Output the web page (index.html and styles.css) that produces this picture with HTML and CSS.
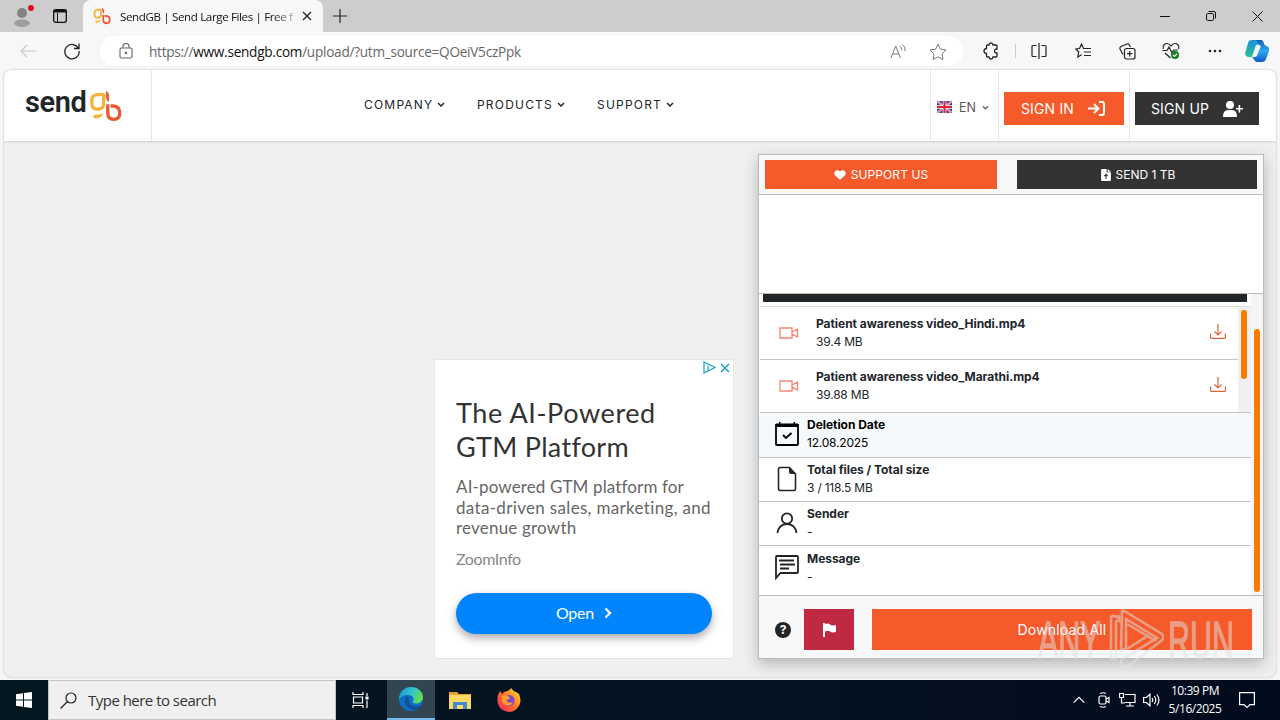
FILE: index.html
```html
<!DOCTYPE html>
<html lang="en">
<head>
<meta charset="utf-8">
<title>SendGB | Send Large Files</title>
<link rel="stylesheet" href="styles.css">
</head>
<body>
<div class="tabs">
  <svg class="profile" width="22" height="24" viewBox="0 0 22 24"><circle cx="9" cy="9" r="5" fill="#858381"/><path d="M1 20c0-6 16-6 16 0q-3 3-8 3t-8-3z" fill="#a09e9c"/><circle cx="18" cy="4" r="3" fill="#e00b1c"/></svg>
  <svg class="workspace" width="14" height="14" viewBox="0 0 14 14"><rect x=".7" y=".7" width="12.6" height="12.6" rx="2" fill="none" stroke="#111" stroke-width="1.3"/><path d="M1 1h12v2H1zM4.5 4v9" fill="#111" stroke="#111"/></svg>
  <div class="tab">
    <svg width="18" height="18" viewBox="0 0 36 34"><use href="#gb"/></svg>
    <span class="tab-title">SendGB | Send Large Files | Free f</span>
    <svg class="tab-close" width="10" height="10" viewBox="0 0 10 10"><path d="M1 1l8 8M9 1L1 9" stroke="#222" stroke-width="1.3"/></svg>
  </div>
  <svg class="tab-new" width="14" height="14" viewBox="0 0 14 14"><path d="M7 0v14M0 7h14" stroke="#222" stroke-width="1.2"/></svg>
  <div class="window-buttons">
    <svg width="10" height="12" viewBox="0 0 10 12"><path d="M0 6.5h10" stroke="#111"/></svg>
    <svg width="10" height="10" viewBox="0 0 10 10" fill="none" stroke="#111"><rect x=".5" y="2.5" width="7" height="7" rx="1.3"/><path d="M2.5.5H8Q9.5.5 9.5 2v5.500"/></svg>
    <svg width="11" height="11" viewBox="0 0 11 11"><path d="M.5.5l10 10M10.500.5l-10 10" stroke="#111"/></svg>
  </div>
</div>
<div class="toolbar">
  <svg class="back" width="16" height="14" viewBox="0 0 16 14" fill="none" stroke="#c8c8c8" stroke-width="1.2"><path d="M16 7H1M7 1L1 7l6 6"/></svg>
  <svg class="reload" width="16" height="18" viewBox="0 0 16 18" fill="none" stroke="#222" stroke-width="1.3"><path d="M14.500 6.500A7.200 7.200 0 1 0 15.200 9M15 1.500v5h-5"/></svg>
  <div class="address">
    <svg class="lock" width="14" height="16" viewBox="0 0 14 16" fill="none" stroke="#666" stroke-width="1.100"><rect x="1" y="5" width="12" height="10" rx="1.500"/><path d="M4 5V3.500a3 3 0 0 1 6 0V5"/><circle cx="7" cy="10" r=".7" fill="#666"/></svg>
    <span class="url">https://<b>www.sendgb.com</b><i>/upload/?utm_source=QOeiV5czPpk</i></span>
    <svg class="read" width="17" height="15" viewBox="0 0 17 15" fill="none" stroke="#777"><path d="M1 14L5.700 2 10.500 14M2.700 10h6M10 2q2 1.500 1.500 4M12.500.5q3.500 2.500 2.500 6.500"/></svg>
    <svg class="star" width="18" height="17" viewBox="0 0 18 17" fill="none" stroke="#777" stroke-linejoin="round"><path d="M9 1l2.400 5.100 5.600.8-4 4 1 5.600-5-2.700-5 2.700 1-5.600-4-4 5.600-.8z"/></svg>
  </div>
  <div class="actions">
    <svg width="16" height="18" viewBox="0 0 16 18" fill="none" stroke="#222" stroke-width="1.300"><path d="M4.500 3H6q.3-2 2-2t2 2h3q1 0 1 1v3q-2.500-.2-2.500 2t2.500 2v3q0 1-1 1h-3q-.2 2-2 2t-2-2H4.500q-1 0-1-1v-2.500Q1 11.300 1 9t2.500-2.500V4q0-1 1-1z"/></svg>
    <span class="divider"></span>
    <svg width="16" height="16" viewBox="0 0 16 16" fill="none" stroke="#222" stroke-width="1.200"><path d="M5.500 2.500H2q-1 0-1 1v9q0 1 1 1h3.500M10.500 2.500H14q1 0 1 1v9q0 1-1 1h-3.500M8 0v16"/></svg>
    <svg width="17" height="16" viewBox="0 0 17 16" fill="none" stroke="#222" stroke-width="1.200"><path d="M9 5.500h-.5L6.500 1 4.600 5.500.9 6l2.800 3-.9 5 3.800-2.300M9 5.500h7M9 9h7M9 12.500h7"/></svg>
    <svg width="17" height="17" viewBox="0 0 17 17" fill="none" stroke="#222" stroke-width="1.200"><rect x="5.500" y="5.500" width="10.500" height="10.500" rx="2"/><path d="M10.700 8v5.500M8 10.700h5.500M4 11.500L1 6q-.5-1.500 1-2.500l6-2.500q1.500-.3 2.200.8L11.500 4"/></svg>
    <svg width="18" height="18" viewBox="0 0 18 18" fill="none" stroke="#222" stroke-width="1.200"><path d="M1.200 7C.5 3 3 1.500 5 1.500S8.300 3 9 4c.7-1 2-2.500 4-2.500s4.500 1.500 3.800 5.500M.5 8.500H5l2-3.500 3 6 1.600-3H16M3 11l5.500 5"/><circle cx="13" cy="13" r="4" fill="#177d28" stroke="none"/><path d="M11 13l1.500 1.500L15 11.800" stroke="#fff"/></svg>
    <svg width="14" height="4" viewBox="0 0 14 4" fill="#222"><circle cx="2" cy="2" r="1.300"/><circle cx="7" cy="2" r="1.300"/><circle cx="12" cy="2" r="1.300"/></svg>
    <svg class="copilot" width="24" height="24" viewBox="0 0 24 24"><defs><linearGradient id="cp1" x2="0" y2="1"><stop stop-color="#1a8fe0"/><stop offset="1" stop-color="#2cc48d"/></linearGradient><linearGradient id="cp2" x2="0" y2="1"><stop stop-color="#1458b8"/><stop offset=".5" stop-color="#29a9ef"/><stop offset="1" stop-color="#1458c9"/></linearGradient></defs><path d="M7 1h10l2 4-8 1-4 12H3q-4-1-2.500-5L3 4q1-3 4-3z" fill="url(#cp1)"/><path d="M11 1h5q2 0 3 4l2 2q4 1 3 5l-3 8q-1 3-4 3h-6l-4-5h3q2 0 3-4l3-7-2-1z" fill="url(#cp2)"/><path d="M11 9q.5-2.500 3.500-2l-2 7q-.5 2.500-3.500 2z" fill="#eef8fb"/></svg>
  </div>
</div>

<main class="page">
  <header class="site-header">
    <div class="logo">
      <span>send</span>
      <svg width="33" height="34" viewBox="0 0 36 34"><g id="gb" fill="none" stroke-width="3.600"><path d="M16.500 4.500H10q-7 0-7 7v2q0 7 6 7t7-5V4.500" stroke="#f7b23b"/><path d="M5 30q7 2.500 11-5-4 2-11 1.500z" fill="#f7b23b" stroke="none"/><path d="M19 1q4 3 2 11-3-3-2-11z" fill="#e65a36" stroke="#e65a36" stroke-width="1"/><path d="M20.500 15v10q0 6.500 6.500 6.500t6.500-7-7-7.500h-3" stroke="#e65a36"/></g></svg>
    </div>
    <nav class="nav">
      <span class="n1">COMPANY<svg width="8" height="5" viewBox="0 0 8 5"><path d="M1 1l3 3 3-3"/></svg></span>
      <span class="n2">PRODUCTS<svg width="8" height="5" viewBox="0 0 8 5"><path d="M1 1l3 3 3-3"/></svg></span>
      <span class="n3">SUPPORT<svg width="8" height="5" viewBox="0 0 8 5"><path d="M1 1l3 3 3-3"/></svg></span>
    </nav>
    <div class="lang">
      <svg width="15" height="12" viewBox="0 0 14 11"><rect width="14" height="11" fill="#34347c"/><path d="M0 0l14 11M14 0L0 11" stroke="#e8dcea" stroke-width="2"/><path d="M0 0l14 11M14 0L0 11" stroke="#d43b55" stroke-width=".8"/><path d="M7 0v11M0 5.500h14" stroke="#fff" stroke-width="3.400"/><path d="M7 0v11M0 5.500h14" stroke="#d9203f" stroke-width="2"/></svg>
      <span>EN</span>
      <svg class="chev" width="7" height="5" viewBox="0 0 8 5"><path d="M1 1l3 3 3-3"/></svg>
    </div>
    <div class="cell signin"><a class="button orange">SIGN IN<svg width="17" height="15" viewBox="0 0 17 15" fill="none" stroke="#fff" stroke-width="2"><path d="M0 7.500h10M6 3l4.500 4.500L6 12M11 1h3q2 0 2 2v9q0 2-2 2h-3"/></svg></a></div>
    <div class="cell signup"><a class="button dark">SIGN UP<svg width="20" height="16" viewBox="0 0 20 16" fill="#fff"><circle cx="7" cy="4" r="4"/><path d="M0 16q0-7 5-7h4q5 0 5 7zM15.500 4h1.700v3H20v1.600h-2.800v3h-1.700v-3H13V7h2.500z"/></svg></a></div>
  </header>
  <div class="content">
    <section class="ad">
      <div class="ad-marks">
        <svg width="13" height="13" viewBox="0 0 13 13" fill="none" stroke="#20a8cc" stroke-width="1.300"><path d="M1 1v11l11-5.500zM5 4.500v5"/></svg>
        <svg width="10" height="10" viewBox="0 0 10 10" stroke="#20a0c8" stroke-width="1.500"><path d="M1 1l8 8M9 1L1 9"/></svg>
      </div>
      <h1><span class="h-a">The AI-Powered</span><br><span class="h-b">GTM Platform</span></h1>
      <p><span class="p-a">AI-powered GTM platform for</span><br><span class="p-b">data-driven sales, marketing, and</span><br><span class="p-c">revenue growth</span></p>
      <div class="brand">ZoomInfo</div>
      <a class="open">Open<svg width="8" height="12" viewBox="0 0 8 12" fill="none" stroke="#fff" stroke-width="2.400"><path d="M1.500 1.500L6 6l-4.500 4.500"/></svg></a>
    </section>
    <section class="panel">
      <div class="panel-top">
        <a class="button orange"><svg width="12" height="10" viewBox="0 0 12 10" fill="#fff"><path d="M6 10L1 5.200C-1.500 2 3-2 6 1.500 9-2 13.500 2 11 5.200z"/></svg>SUPPORT US</a>
        <a class="button dark"><svg width="10" height="12" viewBox="0 0 9 11"><path d="M1 0h4v3h4v7q0 1-1 1H1q-1 0-1-1V1q0-1 1-1zM6 0l3 2.500H6z" fill="#fff"/><path d="M4.500 9V5M2.800 6.500L4.500 4.800l1.700 1.700" stroke="#333" fill="none"/></svg>SEND 1 TB</a>
      </div>
      <div class="slot"></div>
      <div class="scroll">
        <div class="details">
          <div class="bar"></div>
          <div class="files">
            <div class="file-list">
              <div class="file"><svg class="cam" width="20" height="12" viewBox="0 0 20 12"><path d="M1 1h12v10H1zM13 5l5.500-3v8L13 7"/></svg><div class="file-text"><b>Patient awareness video_Hindi.mp4</b><span>39.4 MB</span></div><svg class="down" width="16" height="15" viewBox="0 0 16 15"><path d="M8 0v10.500M4.500 7.500L8 11l3.500-3.500M.6 9.500v4q0 .9.900.9h13q.9 0 .9-.9v-4"/></svg></div>
              <div class="file"><svg class="cam" width="20" height="12" viewBox="0 0 20 12"><path d="M1 1h12v10H1zM13 5l5.500-3v8L13 7"/></svg><div class="file-text"><b>Patient awareness video_Marathi.mp4</b><span>39.88 MB</span></div><svg class="down" width="16" height="15" viewBox="0 0 16 15"><path d="M8 0v10.500M4.500 7.500L8 11l3.500-3.500M.6 9.500v4q0 .9.900.9h13q.9 0 .9-.9v-4"/></svg></div>
            </div>
            <div class="inner-track"><div class="thumb"></div></div>
          </div>
          <div class="info date"><svg width="24" height="26" viewBox="0 0 24 26"><path d="M1 4h22v19q0 1-1 1H2q-1 0-1-1z" fill="none" stroke="#000" stroke-width="1.800"/><path d="M1 2.500h22v3.500H1zM4 1h1.500v3H4zM18.500 1H20v3h-1.500z"/><path d="M8 14l3 3 5.500-5" stroke="#000" stroke-width="1.800" fill="none"/></svg><div><b>Deletion Date</b><span>12.08.2025</span></div></div>
          <div class="info total"><svg width="24" height="26" viewBox="0 0 24 26"><path d="M5 1.500h9.500L20.500 8v15q0 1.500-1.500 1.500H5Q3.500 24.500 3.500 23V3q0-1.500 1.500-1.500z" fill="none" stroke="#212529" stroke-width="1.600"/><path d="M14 1l7 7h-5q-2 0-2-2z" fill="#212529"/></svg><div><b>Total files / Total size</b><span>3 / 118.5 MB</span></div></div>
          <div class="info sender"><svg width="24" height="26" viewBox="0 0 24 26" fill="none" stroke="#212529" stroke-width="1.800"><circle cx="12" cy="8.500" r="5.200"/><path d="M2.500 23c1-12 18-12 19 0"/></svg><div><b>Sender</b><span>-</span></div></div>
          <div class="info message"><svg width="24" height="26" viewBox="0 0 24 26" fill="none" stroke="#212529" stroke-width="1.800"><path d="M1 24V3q0-1 1-1h20q1 0 1 1v15q0 1-1 1H5.500zM4 6.500h15M5 10.500h15M5 14.500h9"/></svg><div><b>Message</b><span>-</span></div></div>
        </div>
        <div class="outer-track"><div class="thumb"></div></div>
      </div>
      <footer class="panel-foot">
        <span class="help">?</span>
        <a class="flag"><svg width="13" height="14" viewBox="0 0 13 14" fill="#fff"><path d="M0 0h2v14H0zM2 1q3-1 5 .5t6 .5v7q-4 1-6-.5T2 8.500z"/></svg></a>
        <a class="download">Download All</a>
      </footer>
    </section>
  </div>
</main>

<div class="watermark"><span class="w-any">ANY</span><svg width="56" height="62" viewBox="0 0 56 62"><path d="M9 9V8Q3 5 3 10v40h5V13q0-2 3-1V6M14 3q0-3 4 0l36 22q3 4-1 7L19 58q-5 3-6-3v-4l36-22-31-19v29l-5 3z"/><path d="M19 15l29 17M19 40l22-14"/></svg><span class="w-run">RUN</span></div>

<footer class="taskbar">
  <div class="start"><svg width="16" height="16" viewBox="0 0 16 16" fill="#fff"><path d="M0 2.300l7-1v6.200H0zM8 1.100L16 0v7.500H8zM0 8.500h7v6.200l-7-1zM8 8.500h8V16l-8-1.100z"/></svg></div>
  <div class="search"><svg width="17" height="17" viewBox="0 0 17 17" fill="none" stroke="#222" stroke-width="1.200"><circle cx="11" cy="6" r="5"/><path d="M7.500 9.500L.5 16.500"/></svg><span>Type here to search</span></div>
  <div class="app views"><svg width="17" height="16" viewBox="0 0 17 16" fill="none" stroke="#fff" stroke-width="1.200"><path d="M1 0v2.500h10V0M1 16v-2.500h10V16M1.500 5h9v6h-9zM15 1v3M15 8.500V16"/><path d="M13.500 4.500h3v3h-3z" fill="#fff" stroke="none"/></svg></div>
  <div class="app active"><svg width="24" height="24" viewBox="0 0 24 24"><defs><linearGradient id="e1" x2="1" y2=".3"><stop stop-color="#1693dd"/><stop offset=".6" stop-color="#32c6c5"/><stop offset="1" stop-color="#62dc5b"/></linearGradient></defs><circle cx="12" cy="12" r="12" fill="#0c70c4"/><path d="M0 11C1 4 6 0 12 0c7 0 12 5 12 10 0 4-3 6.500-7 6.500-3 0-4-1.200-3-2.500 2-3-1-6-5-6-5 0-8 2-9 5z" fill="url(#e1)"/><path d="M8 9c-5 5-1 13 6 14 4 0 7-2 8-5-7 4-14-1-12-7z" fill="#14509c"/></svg></div>
  <div class="app"><svg width="22" height="19" viewBox="0 0 22 19"><path d="M0 1h8l2 2h12v15H0z" fill="#e8a52d"/><path d="M0 4h22v14H0z" fill="#ffd766"/><path d="M4 18v-7h14v7h-4v-4H8v4z" fill="#3b8fd0"/></svg></div>
  <div class="app"><svg width="24" height="24" viewBox="0 0 24 24"><defs><linearGradient id="ff" x1="1" x2="0" y2="1"><stop stop-color="#fff13a"/><stop offset=".45" stop-color="#ff7b25"/><stop offset="1" stop-color="#ef1a67"/></linearGradient></defs><path d="M1 7l2-4 2 3 2-2q5-.5 7-4 2 3 5 4l3 2q3 7 0 12-4 6-10 6Q2 23 .5 14 .2 10 1 7z" fill="url(#ff)"/><circle cx="12" cy="12.500" r="5.500" fill="#7848c9"/><path d="M5 8q5-2 8 2-1 2-4 2 2 4 7 2-3 6-9 2-3-3-2-8z" fill="#ff9b27"/></svg></div>
  <div class="tray">
    <svg width="12" height="8" viewBox="0 0 12 8"><path d="M.7 6.700L6 1.300l5.300 5.400"/></svg>
    <svg class="t2" width="12" height="16" viewBox="0 0 12 16"><rect x="1" y="4" width="7" height="8" rx="1.500"/><path d="M8 7l3-1.500v5L8 9M2 1.500q3-1.500 6 0M2 14.500q3 1.500 6 0"/></svg>
    <svg class="t3" width="17" height="14" viewBox="0 0 17 14"><path d="M6 1.500h10v8H6M11 9.500v3M7 13h8M.5.5h4v4h-4zM2.500 4.500V10H6"/></svg>
    <svg class="t4" width="17" height="14" viewBox="0 0 17 14"><path d="M.6 4.500h2.800L7 1.200v11.600L3.400 9.500H.6zM9 5q1.500 2 0 4M11.300 3q3 4 0 8M13.800 1.500q4.400 5.500 0 11"/></svg>
    <div class="clock"><span>10:39 PM</span><span class="day">5/16/2025</span></div>
    <svg class="t5" width="16" height="16" viewBox="0 0 16 16"><path d="M.6.6h14.800v12H11l-3 2.800-3-2.800H.6z"/></svg>
  </div>
</footer>
</body>
</html>
```
FILE: styles.css
```css
* { box-sizing: border-box; }
body { margin: 0; width: 1280px; height: 720px; overflow: hidden; display: flex; flex-direction: column; background: #f3f5f7; font-family: Inter, sans-serif; color: #212529; position: relative; }
svg { display: block; flex: none; }
span, b, a { white-space: nowrap; }

.tabs { height: 32px; flex: none; display: flex; align-items: center; background: #cdcdcd; }
.profile { margin: 0 0 0 13px; }
.workspace { margin-left: 18px; }
.tab { width: 240px; height: 32px; margin-left: 16px; padding: 0 11px 0 10px; display: flex; align-items: center; background: #f7f7f7; border-radius: 8px 8px 0 0; }
.tab-title { width: 174px; margin-left: 9px; font: 11.600px "Open Sans", sans-serif; letter-spacing: -.38px; color: #111; mask-image: linear-gradient(90deg, #000 88%, rgba(0,0,0,.35)); }
.tab-close { margin-left: 9px; }
.tab-new { margin-left: 10px; }
.window-buttons { margin-left: auto; margin-right: 17px; display: flex; align-items: center; gap: 36px; }

.toolbar { height: 38px; flex: none; display: flex; align-items: center; background: #f7f7f7; }
.back { margin-left: 20px; }
.reload { margin-left: 28px; }
.address { width: 863px; height: 30px; margin-left: 20px; padding: 0 16px 0 19px; display: flex; align-items: center; background: #fff; border-radius: 15px; }
.url { margin-left: 16px; font: 13.600px "Open Sans", sans-serif; letter-spacing: -.26px; color: #666; }
.url b { font-weight: 400; color: #111; letter-spacing: -.26px; }
.url i { font-style: normal; }
.read { margin-left: auto; }
.star { margin-left: 22px; }
.actions { display: grid; grid-template-columns: 44px 4px 44px 44px 44px 44px 44px 40px; margin-left: 6px; align-items: center; justify-items: center; }
.divider { width: 1px; height: 14px; background: #ccc; }

.page { height: 607px; flex: none; margin: 0 4px; border-radius: 8px; overflow: hidden; background: #f0f0f0; box-shadow: 0 0 2px #aaa; }
.site-header { height: 71px; display: flex; background: #fff; box-shadow: 0 1px 2px #ccc; position: relative; }
.logo { width: 148px; border-right: 1px solid #e8e8e8; padding-left: 21px; display: flex; align-items: flex-start; }
.logo span { font: 600 29px/30px Roboto, sans-serif; letter-spacing: -.4px; width: 64px; margin-top: 17px; }
.logo svg { margin-top: 19px; }
.nav { width: 778px; padding: 0 0 2px 212px; display: flex; align-items: center; font-size: 12px; letter-spacing: 1.2px; }
.nav span { display: flex; align-items: center; gap: 4px; }
.nav svg, .chev { fill: none; stroke: #212529; stroke-width: 1.500; }
.n1 { width: 113px; }
.n2 { width: 120px; }
.lang { width: 69px; border: solid #e8e8e8; border-width: 0 1px; padding: 3px 0 0 6px; display: flex; align-items: center; font-size: 12.500px; color: #555; }
.lang span { width: 23px; margin-left: 7px; }
.lang .chev { stroke: #666; }
.button { display: flex; align-items: center; justify-content: center; color: #fff; }
.orange { background: #f45a2a; }
.dark { background: #333; }
.cell { display: flex; align-items: center; padding: 6px 5px 0; font-size: 14px; letter-spacing: .15px; }
.cell .button { height: 33px; gap: 14px; }
.signin { width: 131px; border-right: 1px solid #e8e8e8; }
.signin .button { width: 120px; padding-right: 2px; }
.signup .button { width: 124px; }

.content { height: 536px; display: flex; align-items: flex-end; padding: 0 12px 18px 430px; gap: 24px; }
.ad { width: 300px; height: 300px; background: #fff; border: 1px solid #e5e5e5; padding: 0 21px; font-family: Lato, sans-serif; color: #666; }
.ad-marks { display: flex; justify-content: flex-end; align-items: center; gap: 4px; height: 15px; margin-right: -18px; }
.ad h1 { margin: 21px 0 0; font-size: 27px; line-height: 34px; font-weight: 400; color: #333; letter-spacing: .6px; white-space: nowrap; }
.h-b { letter-spacing: .3px; }
.ad p { margin: 13px 0 0; font-size: 17px; line-height: 20.500px; white-space: nowrap; }
.p-a { letter-spacing: .13px; }
.p-b { letter-spacing: .33px; }
.p-c { letter-spacing: .2px; }
.brand { margin-top: 10px; font-size: 16px; line-height: 20px; letter-spacing: -.4px; color: #888; }
.open { height: 41px; margin-top: 24px; border-radius: 21px; display: flex; align-items: center; justify-content: center; gap: 10px; background: #0085ff; color: #fff; font-size: 16px; letter-spacing: -.2px; box-shadow: 0 4px 9px #aaa; padding-bottom: 1px; }

.panel { width: 506px; height: 505px; border: 1px solid #bbb; background: #fff; box-shadow: 0 5px 14px #b5b5b5; }
.panel-top { height: 40px; border-bottom: 1px solid #bbb; background: #f8f8f8; padding: 5px 6px; display: flex; justify-content: space-between; font-size: 12px; }
.panel-top .button { height: 29px; gap: 5px; }
.panel-top .orange { width: 232px; letter-spacing: .1px; }
.panel-top .dark { width: 240px; padding-left: 2px; }
.slot { height: 99px; border-bottom: 1px solid #bbb; }
.scroll { height: 302px; display: flex; border-bottom: 1px solid #bbb; }
.details { width: 492px; }
.bar { height: 8px; margin: 0 4px; background: #212529; }
.files { display: flex; margin: 4px 0 0 1px; border-top: 1px solid #ddd; }
.file-list { width: 478px; }
.file { height: 53px; border-bottom: 1px solid #c4c4c4; display: flex; align-items: center; padding-left: 19px; font-size: 12px; }
.cam { fill: none; stroke: #f3886c; stroke-width: 1.300; }
.file-text, .info > div { display: flex; flex-direction: column; line-height: 18px; font-size: 12px; }
.file-text { margin-left: 17px; }
b { font-weight: 700; letter-spacing: -.04px; }
.file-text span, .info span { letter-spacing: -.2px; }
.down { margin: -4px 12px 0 auto; fill: none; stroke: #dd6442; stroke-width: 1.200; }
.inner-track { width: 13px; background: #f0f0f0; border-bottom: 1px solid #c4c4c4; padding: 3px 4px 0 3px; }
.inner-track .thumb { height: 69px; }
.thumb { width: 6px; border-radius: 3px; background: #f57c00; }
.info { display: flex; align-items: flex-start; padding: 3px 0 0 16px; gap: 8px; border-bottom: 1px solid #c4c4c4; height: 44px; }
.info svg { margin-top: 5px; }
.date { height: 45px; background: #f5f9fc; color: #000; }
.message { border: 0; padding-top: 4px; }
.message svg { margin-top: 4px; }
.outer-track { width: 12px; background: #f5f5f5; padding: 35px 3px 0; }
.outer-track .thumb { height: 263px; }
.panel-foot { height: 62px; background: #f8f8f8; display: flex; align-items: center; padding: 5px 0 0 16px; }
.help { width: 16px; height: 16px; border-radius: 50%; background: #212529; color: #fff; font-size: 12px; line-height: 16px; font-weight: 700; text-align: center; }
.flag { width: 50px; height: 41px; margin-left: 13px; background: #c02942; display: flex; align-items: center; justify-content: center; }
.download { width: 380px; height: 41px; margin-left: 18px; background: #f45a2a; color: #fff; display: flex; align-items: center; justify-content: center; font-size: 14px; letter-spacing: .18px; }

.watermark { position: absolute; left: 1038px; top: 609px; display: flex; align-items: center; height: 62px; width: 200px; opacity: .5; font: 52px/62px "Liberation Sans", sans-serif; color: #e2e2e2; -webkit-text-stroke: 1.500px #e2e2e2; pointer-events: none; }
.watermark span { transform-origin: 0 50%; transform: scaleX(.585); width: 70px; }
.w-run { margin-left: 4px; }
.watermark svg { fill: none; stroke: #e2e2e2; stroke-width: 2.600; }

.taskbar { height: 40px; flex: none; margin-top: 3px; display: flex; background: linear-gradient(90deg, #03161f, #041221 60%, #020b1d); }
.start, .app { width: 48px; display: flex; align-items: center; justify-content: center; }
.search { width: 288px; border: 1px solid #c4c4c4; background: #f0f0f0; display: flex; align-items: center; padding-left: 11px; font: 15px "Open Sans", sans-serif; color: #333; }
.search span { margin-left: 11px; letter-spacing: -.52px; }
.app { width: 49px; }
.views { width: 51px; padding-right: 3px; }
.active { width: 48px; background: #314650; border-bottom: 2px solid #76b9ed; }
.tray { margin-left: auto; display: flex; align-items: center; color: #fff; }
.tray svg { fill: none; stroke: #fff; stroke-width: 1.200; }
.tray .t2 { margin-left: 13px; }
.tray .t3 { margin-left: 9px; }
.tray .t4 { margin-left: 7px; }
.tray .t5 { margin: 0 25px 0 17px; }
.clock { width: 54px; margin-left: 8px; display: flex; flex-direction: column; align-items: center; font: 12px/18px "Open Sans", sans-serif; letter-spacing: -.45px; }
```
